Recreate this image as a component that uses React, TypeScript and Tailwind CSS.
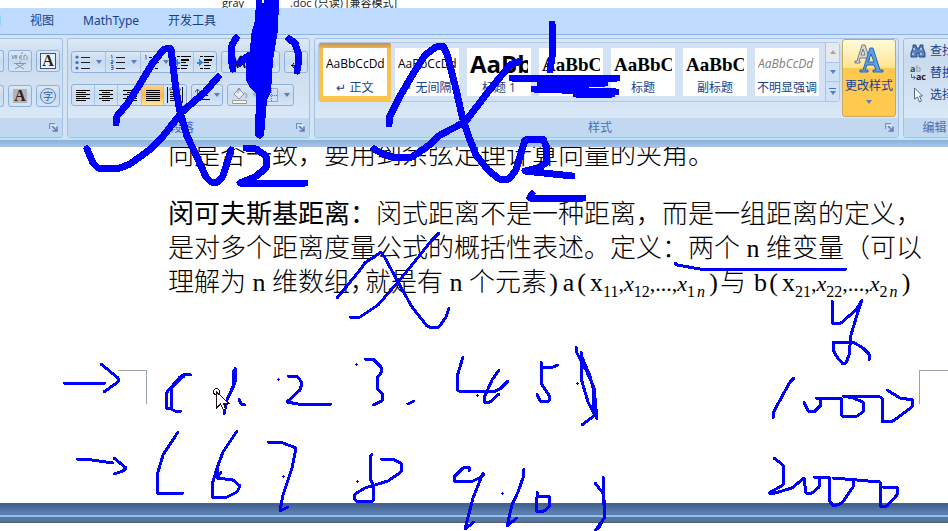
import type { ReactNode } from "react";

const ui = "font-['Open_Sans','Noto_Sans_CJK_SC',sans-serif]";
const serif = "font-['Liberation_Serif','Noto_Sans_CJK_SC',serif]";
const tool =
  "flex h-[22px] shrink-0 items-center justify-center overflow-hidden rounded-[3px] border border-[#8fb0d8] bg-linear-to-b from-[#dbe8f6] via-[#c6daf0] to-[#d6e5f6]";
const cell = "flex h-full items-center justify-center border-r border-[#a9c4e3] last:border-r-0";

function Caret({ className = "text-[#5b7fb4]" }: { className?: string }) {
  return (
    <svg width="6" height="4" viewBox="0 0 6 4" className={className} aria-hidden="true">
      <path d="M0 0h6L3 4z" fill="currentColor" />
    </svg>
  );
}

type Edge = "left" | "center" | "right";

function Align({ widths, edge = "left" }: { widths: number[]; edge?: Edge }) {
  const start = (w: number) => (edge === "left" ? 0 : edge === "right" ? 14 - w : (14 - w) / 2);
  return (
    <svg width="14" height="11" viewBox="0 0 14 11" aria-hidden="true">
      <g fill="#000" shapeRendering="crispEdges">
        {widths.map((w, i) => (
          <rect key={i} x={start(w)} y={i * 2} width={w} height="1" />
        ))}
      </g>
    </svg>
  );
}

function ListIcon({ kind }: { kind: "dot" | "num" | "multi" }) {
  return (
    <svg width="15" height="15" viewBox="0 0 15 15" aria-hidden="true">
      {kind === "dot" && (
        <g fill="#3f6fb5">
          <circle cx="2" cy="2" r="1.6" />
          <circle cx="2" cy="7.500" r="1.6" />
          <circle cx="2" cy="13" r="1.6" />
        </g>
      )}
      {kind === "num" && (
        <path
          d="M1 0.500h1v3M1 5.500h2v2H1v1h2M1 10.500h2v4H1M1 12.500h2"
          fill="none"
          stroke="#3f6fb5"
        />
      )}
      {kind === "multi" && (
        <path d="M1 0.500h1v4M5 7.500h2v3H5v-1.500h2M9 12v3" fill="none" stroke="#3f6fb5" />
      )}
      {kind === "multi" ? (
        <path d="M5 2.500h10M9 7.500h6M11 13.500h4" stroke="#000" strokeDasharray="3 1" />
      ) : (
        <path d="M6 2.500h9M6 7.500h9M6 13.500h9" stroke="#222" />
      )}
    </svg>
  );
}

function IndentIcon({ out }: { out?: boolean }) {
  return (
    <svg width="17" height="13" viewBox="0 0 17 13" shapeRendering="crispEdges" aria-hidden="true">
      <path d="M3 .5h3M7 .5h10M7 6.500h5M7 9.500h7M3 12.500h3M7 12.500h6" stroke="#000" />
      <path d="M7 4h8" stroke="#000" strokeWidth="2" />
      <path
        d={out ? "M6 6.500H1M4 4L1 6.500 4 9" : "M0 6.500h5M2 4l3 2.500L2 9"}
        fill="none"
        stroke="#3f7fd0"
        strokeWidth="2"
      />
    </svg>
  );
}

function Launcher() {
  return (
    <button aria-label="对话框启动器" className="flex size-[9px]">
      <svg width="9" height="9" viewBox="0 0 9 9" fill="none">
        <path d="M0.500 6V0.500H6" stroke="#6d8fbd" />
        <path d="M3 3l4 4M8 3.500V8H3.500" stroke="#5a7eb0" strokeWidth="1.500" />
        <path d="M2 2.500h6" stroke="#fff" strokeOpacity=".6" />
      </svg>
    </button>
  );
}

function Group({
  label,
  className,
  launcher = true,
  children,
}: {
  label: string;
  className: string;
  launcher?: boolean;
  children: ReactNode;
}) {
  return (
    <section
      aria-label={label || "字体"}
      className={`flex h-[100px] flex-col overflow-hidden rounded-[3px] border border-[#a3c1e2] bg-linear-to-b from-[#dce8f5] from-0% via-[#c9dbee] via-20% to-[#dae8f7] to-80% ${className}`}
    >
      <div className="h-[79px]">{children}</div>
      <div className="flex h-[19px] items-center bg-[#c1d8f0] pr-1">
        <span className="flex-1 text-center text-xs whitespace-nowrap text-[#4a6fae]">{label}</span>
        {launcher && <Launcher />}
      </div>
    </section>
  );
}

function FontGroup() {
  return (
    <Group label="" className="w-[63px] shrink-0 rounded-l-none border-l-0">
      <div className="flex flex-col gap-[13px] pt-[11px]">
        <div className="flex gap-1">
          <button aria-label="清除格式" className={`${tool} w-1 rounded-l-none border-l-0`} />
          <button aria-label="拼音指南" className={`${tool} w-6`}>
            <svg width="18" height="18" viewBox="0 0 18 18" fill="none" stroke="#8795ab">
              <path d="M1 3l1 4 2-4 1 4 1-4M8 5h3M11 4c-3-2-4 4 0 3M13 8V3.500c3-1 3 0 3 4.500M10 1.500l2-1M9 9v2M3 11.500h12M5 12l8 5M13 12l-9 5" />
            </svg>
          </button>
          <button aria-label="字符边框" className={`${tool} w-6`}>
            <span className="flex size-4 items-center justify-center border border-[#3d5478] bg-[#eef3fa] font-['Liberation_Serif',serif] text-base leading-none font-bold text-[#222]">
              A
            </span>
          </button>
        </div>
        <div className="flex gap-1">
          <button aria-label="字体颜色" className={`${tool} w-1 rounded-l-none border-l-0`} />
          <button aria-label="字符底纹" className={`${tool} w-6`}>
            <span className="flex size-[14px] items-center justify-center bg-[#b4b4b4] font-['Liberation_Serif',serif] text-base leading-none font-bold text-[#3a1c1c]">
              A
            </span>
          </button>
          <button aria-label="带圈字符" className={`${tool} w-6`}>
            <span className="flex size-4 items-center justify-center rounded-full border border-[#6282ae] text-[10px] leading-none text-[#345a92]">
              字
            </span>
          </button>
        </div>
      </div>
    </Group>
  );
}

function ParagraphGroup() {
  return (
    <Group label="段落" className="w-[243px] shrink-0">
      <div className="flex flex-col gap-[11px] px-[3px] pt-3">
        <div className="flex gap-1">
          <div className={`${tool} w-[146px]`}>
            <button aria-label="项目符号" className={`${cell} w-[34px] gap-1.5`}>
              <ListIcon kind="dot" />
              <Caret />
            </button>
            <button aria-label="编号" className={`${cell} w-[35px] gap-1.5`}>
              <ListIcon kind="num" />
              <Caret />
            </button>
            <button aria-label="多级列表" className={`${cell} w-[31px] gap-1`}>
              <ListIcon kind="multi" />
              <Caret />
            </button>
            <button aria-label="减少缩进量" className={`${cell} w-[22px]`}>
              <IndentIcon out />
            </button>
            <button aria-label="增加缩进量" className={`${cell} w-[22px]`}>
              <IndentIcon />
            </button>
          </div>
          <div className={`${tool} w-[59px]`}>
            <button aria-label="中文版式" className={`${cell} w-[34px] gap-2`}>
              <svg width="16" height="14" viewBox="0 0 16 14" fill="none" stroke="#111" strokeWidth="2">
                <path d="M4 1L1 13M4 1l4 12M1 9h5M11 1l-3 5M11 1l4 12M9 9h5" />
              </svg>
            </button>
            <button aria-label="排序" className={`${cell} w-[24px]`}>
              <svg width="14" height="14" viewBox="0 0 14 14" fill="none" stroke="#345a92">
                <path d="M10 0v12M7 9l3 4 3-4M1 6l2-5 2 5M1 8h4l-4 5h4" />
              </svg>
            </button>
          </div>
          <button aria-label="显示编辑标记" className={`${tool} w-6`}>
            <svg width="14" height="14" viewBox="0 0 14 14" fill="none" stroke="#111">
              <path d="M9 1v5M7 3.500h5M2 10.500h10M9 8v5M5 8l-2 2.500L5 13" />
            </svg>
          </button>
        </div>
        <div className="flex gap-1">
          <div className={`${tool} w-[116px]`}>
            <button aria-label="左对齐" className={`${cell} w-[23px]`}>
              <Align widths={[14, 10, 14, 10, 14, 10]} />
            </button>
            <button aria-label="居中" className={`${cell} w-[24px]`}>
              <Align edge="center" widths={[14, 8, 14, 8, 14, 8]} />
            </button>
            <button aria-label="右对齐" className={`${cell} w-[24px]`}>
              <Align edge="right" widths={[14, 10, 14, 10, 14, 10]} />
            </button>
            <button
              aria-label="两端对齐"
              className={`${cell} w-[23px] bg-linear-to-b from-[#fbd18e] via-[#ffb444] to-[#ffe79a]`}
            >
              <Align widths={[14, 14, 14, 14, 14, 14]} />
            </button>
            <button aria-label="分散对齐" className={`${cell} w-[22px]`}>
              <svg width="16" height="16" viewBox="0 0 16 16" fill="none" stroke="#111">
                <path d="M0.500 0v16M15.500 0v16M3 5.500h10M3 7.500h10M3 9.500h10M3 11.500h10M3 13.500h10" />
                <path d="M3 2.500h10M5 0L2 2.500 5 5M11 0l3 2.500L11 5" stroke="#3f7fd0" />
              </svg>
            </button>
          </div>
          <button aria-label="行距" className={`${tool} w-8 gap-1`}>
            <svg width="16" height="15" viewBox="0 0 16 15" fill="none">
              <path d="M3.500 1v13M1 4l2.500-3L6 4M1 11l2.500 3L6 11" stroke="#345a92" />
              <path d="M8 3.500h8M8 7.500h6M8 11.500h8" stroke="#111" />
            </svg>
            <Caret />
          </button>
          <div className={`${tool} w-[67px]`}>
            <button aria-label="底纹" className={`${cell} w-[33px] gap-1`}>
              <svg width="17" height="17" viewBox="0 0 17 17" fill="none" stroke="#8b94a2">
                <path d="M3 7l5-5 5 5-5 5z" fill="#e9edf2" />
                <path d="M7 6V1.500h2V4" />
                <path d="M13 6c3 0 3 2 2 5" stroke="#a9b8cc" strokeWidth="2" />
                <path d="M1.500 13.500h14v3h-14z" fill="#fff" stroke="#9a9a90" />
              </svg>
              <Caret className="text-[#a4adba]" />
            </button>
            <button aria-label="边框" className={`${cell} w-[32px] gap-1.5`}>
              <svg width="14" height="14" viewBox="0 0 14 14" fill="none" stroke="#69737f" strokeDasharray="1 1">
                <path d="M.5.5h13v13H.5zM7.500 0v14M0 7.500h14" />
              </svg>
              <Caret />
            </button>
          </div>
        </div>
      </div>
    </Group>
  );
}

const body = "font-['Open_Sans',sans-serif] text-[12px]";
const cambria = "font-['Liberation_Serif',serif] text-[19px] font-bold text-black";
const styles = [
  { name: "↵ 正文", sample: "AaBbCcDd", look: `${body} text-black` },
  { name: "↵ 无间隔", sample: "AaBbCcDd", look: `${body} text-black` },
  { name: "标题 1", sample: "AaBb", look: "font-['Open_Sans',sans-serif] text-[24px] font-bold text-black" },
  { name: "标题 2", sample: "AaBbC", look: cambria },
  { name: "标题", sample: "AaBbC", look: cambria },
  { name: "副标题", sample: "AaBbC", look: cambria },
  { name: "不明显强调", sample: "AaBbCcDd", look: `${body} italic text-[#808080]` },
];

function StylesGroup() {
  return (
    <Group label="样式" className="min-w-0 flex-1">
      <div className="flex justify-between pr-0.5 pl-[3px]">
        <div className="mt-[3px] flex h-[60px] rounded-[3px] border border-[#b0c9e6] bg-[#d3e3f5]">
          {styles.map((s, i) => (
            <button
              key={s.name}
              className={`flex h-[58px] w-[72px] flex-col overflow-hidden px-1 py-[5px] ${
                i === 0 ? "rounded-[2px] bg-linear-to-b from-[#c48f52] from-0% via-[#f6bd4d] via-10% to-[#fcc54a]" : ""
              }`}
            >
              <span className="flex h-12 w-16 flex-col overflow-hidden bg-white px-[3px]">
                <span className={`flex h-8 items-center overflow-hidden leading-none ${s.look}`}>{s.sample}</span>
                <span className="-mx-1 text-center text-xs leading-4 whitespace-nowrap text-[#15428b]">{s.name}</span>
              </span>
            </button>
          ))}
          <div className="ml-[2px] flex w-[14px] flex-col">
            <button
              aria-label="上一行"
              className="flex flex-1 items-center justify-center border-l border-[#a9c4e3] bg-[#e6e9ee]"
            >
              <Caret className="rotate-180 text-[#a5a9ae]" />
            </button>
            <button
              aria-label="下一行"
              className="flex flex-1 items-center justify-center border-y border-l border-[#a9c4e3] bg-[#cfe1f6]"
            >
              <Caret />
            </button>
            <button
              aria-label="其他"
              className="flex flex-1 flex-col items-center justify-center gap-0.5 border-l border-[#a9c4e3] bg-[#cfe1f6]"
            >
              <span className="h-px w-[7px] bg-[#4a6fae]" />
              <Caret />
            </button>
          </div>
        </div>
        <button className="flex h-[78px] w-[54px] flex-col items-center rounded-[3px] border border-[#c9a860] bg-linear-to-b from-[#fffbd9] from-0% via-[#ffe491] via-36% to-[#ffc94f] to-37% pt-1">
          <svg width="30" height="29" viewBox="0 0 30 29" aria-hidden="true">
            <path
              d="M1 19h5v-2H5l1-3h6l1 3 3-1-5-15H8L3 17H1zM7 11l2-6 2 6z"
              fill="#d5d6db"
              stroke="#777b86"
            />
            <path
              d="M6 28h8v-2h-3l2-5h7l2 5h-3v2h10v-2h-3L19 4h-3L9 26H6zM14 18l3-8 3 8z"
              fill="#5ea0e6"
              stroke="#2766b5"
            />
          </svg>
          <span className="mt-[5px] text-xs leading-4 whitespace-nowrap text-[#15428b]">更改样式</span>
          <span className="mt-[6px] flex">
            <Caret />
          </span>
        </button>
      </div>
    </Group>
  );
}

function EditGroup() {
  return (
    <Group label="编辑" launcher={false} className="w-[67px] -mr-[22px] shrink-0">
      <div className="flex flex-col pt-px pl-1.5 text-xs leading-[22px] whitespace-nowrap text-[#15428b]">
        <button className="flex items-center gap-1">
          <svg width="16" height="14" viewBox="0 0 16 14" className="shrink-0" aria-hidden="true">
            <path
              d="M3 1h3v2h1v2h2V3h1V1h3v3l2 5v4H9V9H7v4H1V9l2-5z"
              fill="#5b82b8"
              stroke="#234a86"
            />
            <path d="M3 9v2M11 9v2M4 4v2M11 4v2" stroke="#fff" />
          </svg>
          查找
        </button>
        <button className="flex items-center gap-1">
          <span className="flex w-4 shrink-0 flex-col text-[9px] leading-[8px] font-bold">
            <span className="text-left">
              <span className="text-[#444]">a</span>
              <span className="text-[#a7adb6]">b</span>
            </span>
            <span className="flex items-center justify-end text-[#3a1515]">
              <svg width="5" height="6" viewBox="0 0 5 6" fill="none" stroke="#3f6fb5">
                <path d="M.5 0v3.500H4M2.500 2l2 1.500-2 2" />
              </svg>
              ac
            </span>
          </span>
          替换
        </button>
        <button className="flex items-center gap-1">
          <svg width="16" height="16" viewBox="0 0 16 16" className="shrink-0" aria-hidden="true">
            <path d="M4.500 1v11l3-2 2 5 2-1-2-5h3z" fill="#fff" stroke="#536a8c" />
          </svg>
          选择
        </button>
      </div>
    </Group>
  );
}

function Ribbon() {
  return (
    <header className={`${ui} shrink-0`}>
      <div className="flex h-2 items-end gap-[46px] overflow-hidden bg-white pl-[222px] text-[11px] leading-[10px] whitespace-nowrap text-[#222]">
        <span>gray</span>
        <span className="flex-1">.doc (只读) [兼容模式]</span>
      </div>
      <nav className="flex h-[27px] items-center gap-[29px] border-b border-[#8db2e3] bg-[#bfdbff] text-xs text-[#15428b]">
        <button className="-ml-[23px]">审阅</button>
        <button>视图</button>
        <button className="font-['Noto_Sans',sans-serif]">MathType</button>
        <button>开发工具</button>
      </nav>
      <div className="flex h-[105px] gap-1 overflow-hidden border-b-2 border-[#b5eaf5] bg-[#d4e4f4] pt-[3px]">
        <FontGroup />
        <ParagraphGroup />
        <StylesGroup />
        <EditGroup />
      </div>
      <div className="h-[7px] bg-linear-to-b from-[#8fb0d8] to-[#a9c4ea]" />
    </header>
  );
}

function Sub({ children, italic }: { children: string; italic?: boolean }) {
  return (
    <span className={`inline-block translate-y-[6px] text-base leading-none ${italic ? "italic" : ""}`}>
      {children}
    </span>
  );
}

const half = "inline-block w-[13px] text-center";

function Vector({ name, row }: { name: string; row: string }) {
  return (
    <span className="inline-flex items-baseline">
      <span className={half}>{name}</span>
      <span className={half}>(</span>
      <span className="ml-0.5">x</span>
      <Sub>{`${row}1`}</Sub>
      <span className="text-[22px]">
        ,<i>x</i>
      </span>
      <Sub>{`${row}2`}</Sub>
      <span className="text-[22px]">
        ,...,<i>x</i>
      </span>
      <Sub>{row}</Sub>
      <span className="ml-0.5">
        <Sub italic>n</Sub>
      </span>
      <span className={`ml-0.5 ${half}`}>)</span>
    </span>
  );
}

function Document() {
  return (
    <main
      className={`${serif} flex-1 overflow-hidden bg-white text-[26px] leading-[34px] font-light whitespace-nowrap text-black`}
    >
      <div className="-mt-2 pl-[168px]">
        <p>向是否一致，要用到余弦定理计算向量的夹角。</p>
        <p className="mt-[25px]">
          <strong className="font-normal">闵可夫斯基距离：</strong>闵式距离不是一种距离，而是一组距离的定义，
        </p>
        <p>是对多个距离度量公式的概括性表述。定义：两个 n 维变量（可以</p>
        <p className="flex">
          <span>理解为 n 维数组</span>
          <span className="w-[15px] overflow-hidden">，</span>
          <span>就是有 n 个元素</span>
          <span className={half}>)</span>
          <span className="ml-0.5">
            <Vector name="a" row="1" />
          </span>
          <span>与</span>
          <span className="ml-2">
            <Vector name="b" row="2" />
          </span>
        </p>
      </div>
      <div className="mt-[69px] flex justify-between pl-[118px]">
        <div className="h-[34px] w-[29px] border-t border-r border-[#9aa2ae]" />
        <div className="h-[34px] w-[29px] border-t border-l border-[#9aa2ae]" />
      </div>
    </main>
  );
}

const thick = [
  "M116 123L117 116 128 103 140 84 152 64 163 50 168 48 171 49 173 66 176 90 180 112 187 136 196 155 206 177 211 182 218 182 223 176 231 150",
  "M218 77L205 92 182 112 160 140 148 151 130 164 120 168 98 168 93 163 87 149",
  "M236 38L232 45 231 58 233 69",
  "M289 39L295 43 299 55 298 65 297 71",
  "M240 63L248 56",
  "M246 148L256 149 266 156 266 168 255 177 240 183 305 183",
  "M389 124L389 118 400 96 413 74 425 55 436 47 443 46 447 54 455 85 463 120 470 140 476 155 488 170 499 179 509 179 516 170 525 140 533 139 543 139 547 148 546 163 538 168 525 171 572 176",
  "M518 62L510 65 488 92 465 122 440 135 428 146 412 157 395 158 383 154 374 149",
  "M532 194L530 198 583 198",
  "M552 24L552 57 550 70",
  "M512 78L617 78",
  "M534 89L616 92M576 94L612 94M540 83L605 83",
];

const thin = [
  "M337 298L360 270 365 263 381 252 385 258 398 282 412 307 427 326 432 328 439 327 446 317 449 308",
  "M439 233L432 240 420 255 398 282 378 305 360 317 350 317",
  "M675 263L677 265 700 269 846 269",
  "M832 301L832 323 841 323 856 310 862 300 857 315 851 335 849 355 846 363 843 364 837 357 833 350 833 342 853 342 863 348 869 354 869 360",
  "M794 378L790 382 773 413 773 418",
  "M804 402L808 411 814 412 821 405 820 398M816 398L841 398 842 416 857 416 863 412 863 402 853 398 843 396 878 396 882 398 882 422 893 421 912 407 913 400 900 398 887 390",
  "M774 458L783 465 783 485 769 493 775 493 792 488 804 478 806 493 812 493 819 487 819 478M814 477L829 477 830 502 834 506 842 503 853 487 853 481M833 478L880 482 881 507 887 506 897 495 897 487 883 487",
  "M64 383L105 383M101 364L118 378 118 382 104 392",
  "M191 375L185 374 180 377 167 392 166 408 171 409 175 411 181 411M184 376L171 388 171 409",
  "M235 368L235 382 227 400 224 414M234 370L233 388 228 398M239 399L241 404 245 405",
  "M288 376L298 377 302 383 300 390 287 402 298 404 331 404",
  "M77 459L92 460 113 463M114 458L126 468 123 471 114 474",
  "M178 432L163 455 158 472 157 493 183 493",
  "M237 431L223 452 217 468 212 485 212 497 227 497 237 492 240 486 233 480 217 478 221 472M217 468V478",
  "M268 442L283 443 296 448 292 468 283 495 280 511 288 507",
  "M365 359L373 359 381 367 381 373 377 378 377 388 383 395 382 401 373 405M408 404L414 401",
  "M463 357L457 377 458 391 493 392 500 389 508 381M499 370L492 380 484 398 485 403 490 402 499 394",
  "M541 362L541 383 550 397 549 401 540 401 537 394M542 367L553 367 558 365",
  "M576 347L577 353 587 372 594 388 597 419M581 352L581 378 588 402 595 415 582 425M581 355L590 376 593 388 594 412",
  "M372 454L370 457 370 478 374 487 373 501 357 502 354 498 355 494 365 488 388 481 401 472 401 463 392 459 381 459",
  "M469 471L469 467 463 468 454 477 454 481 473 481 483 476 483 473 473 498 465 529 474 522",
  "M524 469L523 478 518 492 512 505 507 526 517 518",
  "M537 492L537 496 549 496 549 507 544 511 536 511 536 498",
  "M603 477L603 492 605 517 595 531M595 483L603 493M604 500V518L598 529",
];

const dots = [
  [278, 379],
  [283, 476],
  [356, 364],
  [477, 395],
  [577, 383],
  [357, 481],
  [502, 493],
];

function Ink() {
  return (
    <svg
      width="948"
      height="531"
      viewBox="0 0 948 531"
      className="pointer-events-none absolute top-0 left-0"
      shapeRendering="crispEdges"
      fill="none"
      stroke="#0000ff"
      strokeLinecap="round"
      strokeLinejoin="round"
      aria-hidden="true"
    >
      <path
        d="M256 0L255 20 251 35 250 52 246 55 246 80 250 88 256 93 255 136 260 139 264 136 267 100 271 92 273 60 278 30 279 0H264V3H262V0Z"
        fill="#0000ff"
        stroke="none"
      />
      {thick.map((d) => (
        <path key={d} d={d} strokeWidth="7" />
      ))}
      {thin.map((d) => (
        <path key={d} d={d} strokeWidth="3" />
      ))}
      {dots.map(([x, y]) => (
        <path key={`${x}-${y}`} d={`M${x - 1} ${y}.5h3M${x}.5 ${y - 1}v3`} strokeWidth="1" strokeLinecap="butt" />
      ))}
      <circle cx="216.500" cy="391.500" r="3" stroke="#111" strokeWidth="1" />
      <path
        d="M216.500 392v16l4-4 3 6 2-1-2-6h5z"
        fill="#fff"
        stroke="#2a1020"
        strokeWidth="1"
        strokeLinejoin="miter"
      />
    </svg>
  );
}

export default function App() {
  return (
    <div className="relative flex h-screen flex-col overflow-hidden bg-white">
      <Ribbon />
      <Document />
      <footer className="mb-2 flex h-5 shrink-0 flex-col border-y border-[#55606e] bg-linear-to-b from-[#41608a] via-[#5a80b4] to-[#4e719f]">
        <div className="mt-[11px] h-0.5 bg-[#9dbbe3]" />
      </footer>
      <Ink />
    </div>
  );
}
